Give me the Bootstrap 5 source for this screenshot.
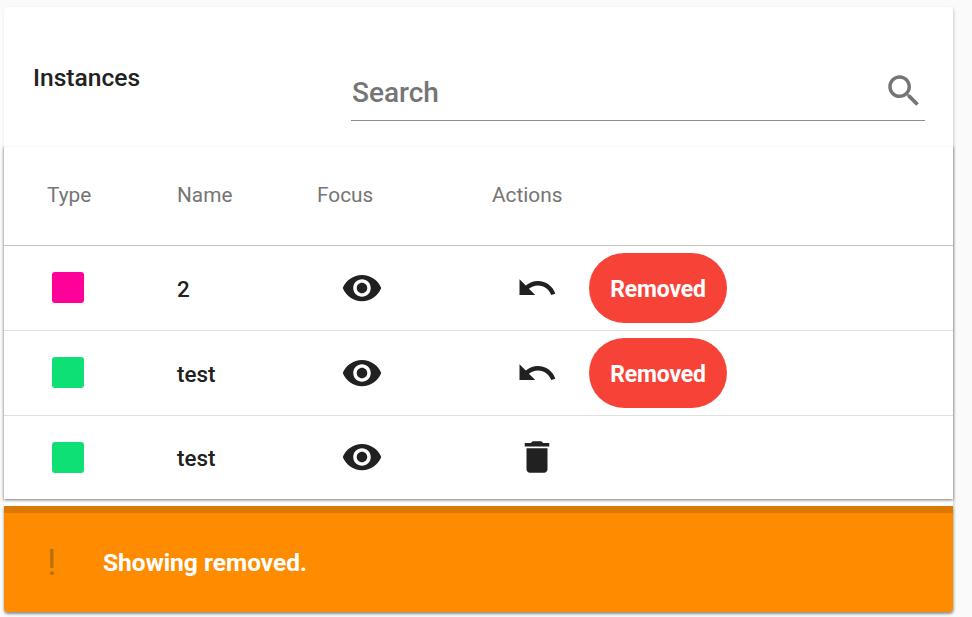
<!DOCTYPE html>
<html lang="en">
<head>
<meta charset="utf-8">
<title>Instances</title>
<link href="https://cdn.jsdelivr.net/npm/bootstrap@5.3.0/dist/css/bootstrap.min.css" rel="stylesheet">
<style>
html, body { height: 100%; overflow: hidden; }
body { background: #fafafa; font-family: Roboto, sans-serif; color: #212121; }
.shell { width: 949px; margin: 7px 0 0 4px; background: #fff; border-radius: 4px; box-shadow: 1px 1px 3px rgba(0,0,0,.18); }
.top-bar { height: 139px; position: relative; background: #fff; border-radius: 4px 4px 0 0; box-shadow: 0 1px 0 #f8f8f8; }
.panel-title { width: 347px; padding: 56px 0 0 29px; font-size: 24.6px; font-weight: 500; line-height: 30px; margin: 0; color: #212121; }
.search-wrap { width: 574px; height: 114px; border-bottom: 1px solid #8e8e8e; padding-top: 64px; }
.search-input { border: 0; outline: 0; padding: 0 0 0 1px; flex: 1 1 auto; min-width: 0; font: 500 28px/44px Roboto, sans-serif; color: #757575; background: transparent; }
.search-input::placeholder { color: #757575; opacity: 1; }
.search-wrap svg { margin-top: -1px; flex: none; }
.sheet { box-shadow: 0 1px 3px rgba(0,0,0,.55); }
.sheet .table { margin: 0; table-layout: fixed; --bs-table-bg: transparent; }
.sheet th { height: 99px; padding: 0 0 0 43px; vertical-align: middle; font-size: 20.8px; font-weight: 400; color: #757575; border-bottom: 1px solid #c4c4c4; }
.sheet td { padding: 0; vertical-align: middle; height: 85px; border-bottom: 1px solid #e0e0e0; font-size: 22.4px; font-weight: 500; color: #212121; }
.sheet tr:last-child td { border-bottom: 0; height: 84px; }
.sheet th.c-name, .sheet th.c-focus, .sheet th.c-actions { padding-left: 0; }
.name-cell { padding-top: 4px !important; }
.swatch { display: block; width: 31.5px; height: 31.5px; border-radius: 3px; margin-left: 48px; }
.swatch-pink { background: #ff0099; }
.swatch-green { background: #0fe076; }
.eye-cell svg { margin-left: 24px; display: block; }
.act-cell { gap: 31px; padding-left: 24px; }
.act-cell svg { flex: none; }
.pill-removed { width: 138px; height: 70px; border-radius: 35px; background: #f74337; border: 0; color: #fff; font-size: 23px; font-weight: 700; padding: 6px 0 0; letter-spacing: -.2px; }
.notice { margin: 7px 0 0; padding: 0; border: 0; border-top: 7px solid #db7900; border-radius: 0 0 4px 4px; background: #ff8c00; height: 106px; color: #fff; font-size: 24.5px; font-weight: 700; box-shadow: 0 2px 3px rgba(0,0,0,.35); }
.notice-mark { width: 99px; padding-left: 43px; color: #bd6e0c; font-size: 36px; font-weight: 400; line-height: 1; }
.notice-text { padding-top: 2px; }
</style>
</head>
<body>
<div class="shell">
  <div class="top-bar d-flex align-items-start">
    <h2 class="panel-title">Instances</h2>
    <div class="search-wrap d-flex align-items-start">
      <input class="search-input" type="text" placeholder="Search" aria-label="Search">
      <svg width="42" height="42" viewBox="0 0 24 24" fill="#757575"><path d="M15.5 14h-.79l-.28-.27C15.41 12.59 16 11.11 16 9.5 16 5.91 13.09 3 9.5 3S3 5.91 3 9.5 5.91 16 9.5 16c1.61 0 3.09-.59 4.23-1.57l.27.28v.79l5 4.99L20.49 19l-4.99-5zm-6 0C7.01 14 5 11.99 5 9.5S7.01 5 9.5 5 14 7.01 14 9.5 11.99 14 9.5 14z"/></svg>
    </div>
  </div>
  <div class="sheet">
    <table class="table">
      <colgroup><col style="width:173px"><col style="width:140px"><col style="width:175px"><col></colgroup>
      <thead>
        <tr><th>Type</th><th class="c-name">Name</th><th class="c-focus">Focus</th><th class="c-actions">Actions</th></tr>
      </thead>
      <tbody>
        <tr>
          <td><span class="swatch swatch-pink"></span></td>
          <td class="name-cell">2</td>
          <td class="eye-cell"><svg width="42" height="42" viewBox="0 0 24 24" fill="#212121"><path d="M12 4.5C7 4.5 2.73 7.61 1 12c1.73 4.39 6 7.5 11 7.5s9.27-3.11 11-7.5c-1.73-4.39-6-7.5-11-7.5zM12 17c-2.76 0-5-2.24-5-5s2.24-5 5-5 5 2.24 5 5-2.24 5-5 5zm0-8c-1.66 0-3 1.34-3 3s1.34 3 3 3 3-1.34 3-3-1.34-3-3-3z"/></svg></td>
          <td><div class="act-cell d-flex align-items-center"><svg width="42" height="42" viewBox="0 0 24 24" fill="#212121"><path d="M12.5 8c-2.65 0-5.05.99-6.9 2.6L2 7v9h9l-3.62-3.62c1.39-1.16 3.16-1.88 5.12-1.88 3.54 0 6.55 2.31 7.6 5.5l2.37-.78C21.08 11.03 17.15 8 12.5 8z"/></svg><button type="button" class="btn pill-removed">Removed</button></div></td>
        </tr>
        <tr>
          <td><span class="swatch swatch-green"></span></td>
          <td class="name-cell">test</td>
          <td class="eye-cell"><svg width="42" height="42" viewBox="0 0 24 24" fill="#212121"><path d="M12 4.5C7 4.5 2.73 7.61 1 12c1.73 4.39 6 7.5 11 7.5s9.27-3.11 11-7.5c-1.73-4.39-6-7.5-11-7.5zM12 17c-2.76 0-5-2.24-5-5s2.24-5 5-5 5 2.24 5 5-2.24 5-5 5zm0-8c-1.66 0-3 1.34-3 3s1.34 3 3 3 3-1.34 3-3-1.34-3-3-3z"/></svg></td>
          <td><div class="act-cell d-flex align-items-center"><svg width="42" height="42" viewBox="0 0 24 24" fill="#212121"><path d="M12.5 8c-2.65 0-5.05.99-6.9 2.6L2 7v9h9l-3.62-3.62c1.39-1.16 3.16-1.88 5.12-1.88 3.54 0 6.55 2.31 7.6 5.5l2.37-.78C21.08 11.03 17.15 8 12.5 8z"/></svg><button type="button" class="btn pill-removed">Removed</button></div></td>
        </tr>
        <tr>
          <td><span class="swatch swatch-green"></span></td>
          <td class="name-cell">test</td>
          <td class="eye-cell"><svg width="42" height="42" viewBox="0 0 24 24" fill="#212121"><path d="M12 4.5C7 4.5 2.73 7.61 1 12c1.73 4.39 6 7.5 11 7.5s9.27-3.11 11-7.5c-1.73-4.39-6-7.5-11-7.5zM12 17c-2.76 0-5-2.24-5-5s2.24-5 5-5 5 2.24 5 5-2.24 5-5 5zm0-8c-1.66 0-3 1.34-3 3s1.34 3 3 3 3-1.34 3-3-1.34-3-3-3z"/></svg></td>
          <td><div class="act-cell d-flex align-items-center"><svg width="42" height="42" viewBox="0 0 24 24" fill="#212121"><path d="M6 19c0 1.1.9 2 2 2h8c1.1 0 2-.9 2-2V7H6v12zM19 4h-3.5l-1-1h-5l-1 1H5v2h14V4z"/></svg></div></td>
        </tr>
      </tbody>
    </table>
  </div>
  <div class="alert notice d-flex align-items-center" role="alert">
    <span class="notice-mark">!</span>
    <span class="notice-text">Showing removed.</span>
  </div>
</div>
<script src="https://cdn.jsdelivr.net/npm/bootstrap@5.3.0/dist/js/bootstrap.bundle.min.js"></script>
</body>
</html>
